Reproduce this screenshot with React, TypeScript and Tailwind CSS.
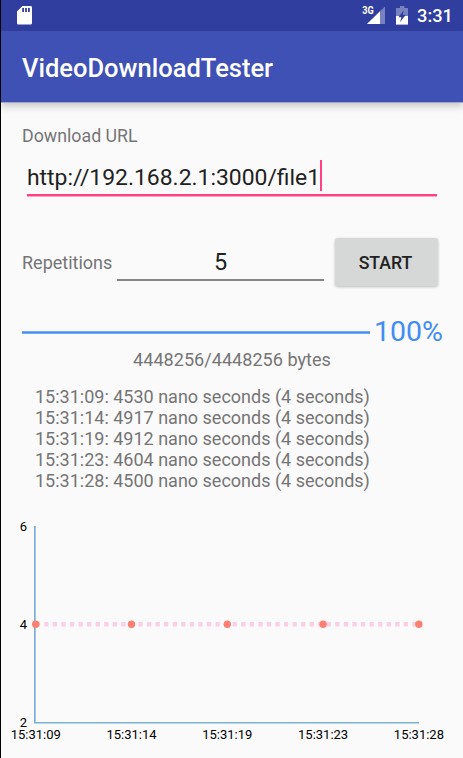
import React from "react";

const logs = [
  "15:31:09: 4530 nano seconds (4 seconds)",
  "15:31:14: 4917 nano seconds (4 seconds)",
  "15:31:19: 4912 nano seconds (4 seconds)",
  "15:31:23: 4604 nano seconds (4 seconds)",
  "15:31:28: 4500 nano seconds (4 seconds)",
];

const points = [
  { x: 35.7, label: "15:31:09" },
  { x: 131.5, label: "15:31:14" },
  { x: 227.3, label: "15:31:19" },
  { x: 323.1, label: "15:31:23" },
  { x: 418.9, label: "15:31:28" },
];

function StatusBar() {
  return (
    <div className="flex h-[31px] shrink-0 items-start bg-[#303f9f] text-white">
      <svg className="ml-4 mt-[6px]" width="16" height="19" viewBox="0 0 16 19">
        <path
          fillRule="evenodd"
          fill="#fff"
          d="M5.4 0H13.6Q15 0 15 1.4V17Q15 18.6 13.5 18.6H1.6Q0 18.6 0 17V5.6ZM5.2 2V6H7V2ZM8.1 2V6H9.9V2ZM11 2V6H12.8V2Z"
        />
      </svg>
      <svg className="ml-auto" width="46" height="31" viewBox="0 0 46 31">
        <path d="M23 6.5V24H5Z" fill="#fff" opacity=".35" />
        <path d="M18 11.3V24H5Z" fill="#fff" />
        <text x="0.3" y="14" fontFamily="Roboto, sans-serif" fontSize="10" fontWeight="700" fill="#fff" textLength="11.5" lengthAdjust="spacingAndGlyphs">3G</text>
        <path d="M34 8H38V6H42.3V8H46V16H34Z" fill="#fff" opacity=".35" />
        <path d="M34 16H46V24.6H34Z" fill="#fff" />
        <path d="M41.8 10.3L36.4 17.2H39.4L38 22.3L43.8 14.8H40.8Z" fill="#303f9f" />
      </svg>
      <span className="ml-[9.2px] mr-[11px] mt-[4px] w-[35px] whitespace-nowrap text-[18.3px] font-medium leading-[24px]">3:31</span>
    </div>
  );
}

function Chart() {
  return (
    <svg className="block" width="462" height="248" viewBox="1 510 462 248" fontFamily="Roboto, sans-serif" fontSize="13" fill="#000">
      <rect x="34" y="526" width="1.5" height="197" fill="#7cb1d6" />
      <rect x="35.5" y="526" width=".5" height="197" fill="#7cb1d6" opacity=".8" />
      <rect x="34" y="722" width="385" height="1.5" fill="#7cb1d6" />
      <text x="27" y="531" textAnchor="end">6</text>
      <text x="27" y="629" textAnchor="end">4</text>
      <text x="27" y="727" textAnchor="end">2</text>
      <path d="M35.7 624.3H419" stroke="#fccde4" strokeWidth="4.5" strokeDasharray="4.28 4.28" />
      {points.map((p) => (
        <g key={p.label}>
          <circle cx={p.x} cy="624.3" r="3.7" fill="#fa8072" />
          <text x={p.x} y="739" textAnchor="middle">{p.label}</text>
        </g>
      ))}
    </svg>
  );
}

export default function App() {
  return (
    <div className="flex h-[758px] w-[463px] flex-col overflow-hidden border-l border-black bg-[#fafafa] font-['Roboto',sans-serif] text-[18px] text-[#757575]">
      <StatusBar />
      <header className="flex h-[71px] shrink-0 items-center bg-[#3f51b5] pl-[21px] pt-[3px] text-[25.5px] font-medium text-white shadow-[0_1px_0_#a3a8c8,0_4px_8px_rgba(0,0,0,0.22)]">
        <h1 className="whitespace-nowrap">VideoDownloadTester</h1>
      </header>
      <main className="flex h-[408px] shrink-0 flex-col pl-[21px] pt-[23px]">
        <label className="h-[22px] text-[17.8px] leading-[22px]">Download URL</label>
        <div className="ml-[5px] mt-[12px] flex h-[37px] w-[410px] items-start border-b-2 border-[#ff4081] text-[22.9px] leading-[37px] text-[#212121] shadow-[0_1px_0_#fda3c1]">
          <span className="whitespace-nowrap">http://192.168.2.1:3000/file1</span>
          <span className="mt-[1px] h-[31px] w-[2px] bg-[#ff4081]" />
        </div>
        <div className="mt-[42px] flex h-[48px]">
          <label className="w-[95px] whitespace-nowrap leading-[49px]">Repetitions</label>
          <div className="h-[43px] w-[207px] border-b-2 border-[#858585] text-center text-[23.5px] leading-[49px] text-[#212121]">5</div>
          <button className="ml-[11px] h-[48px] w-[103px] rounded-[3px] bg-[#d6d7d7] pr-[8px] pt-[2px] text-[17.7px] font-medium text-[#212121] shadow-[0_1px_3px_rgba(0,0,0,0.25)]"><span className="pl-[6px]">START</span></button>
        </div>
        <div className="mt-[29px] flex h-[34px] items-center text-[#428df3]">
          <div className="h-px w-[348px] bg-[#428df3] shadow-[0_1px_0_#74abf5,0_-1px_0_#74abf5]" />
          <span className="ml-[4px] whitespace-nowrap text-[28.5px] leading-[34px]">100%</span>
        </div>
        <p className="mr-[21px] h-[22px] text-center text-[18.1px] leading-[22px]">4448256/4448256 bytes</p>
        <div className="ml-[13px] mt-[15px] leading-[21px]">
          {logs.map((line) => (
            <p key={line} className="whitespace-nowrap">{line}</p>
          ))}
        </div>
      </main>
      <Chart />
    </div>
  );
}
